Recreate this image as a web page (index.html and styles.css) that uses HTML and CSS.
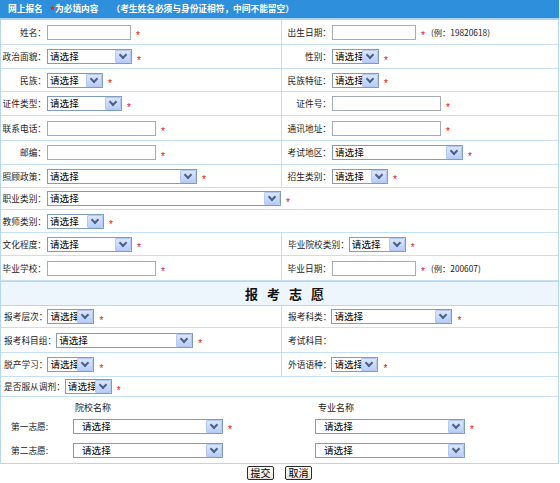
FILE: index.html
```html
<!DOCTYPE html>
<html lang="zh-CN">
<head>
<meta charset="utf-8">
<title>网上报名</title>
<link rel="stylesheet" href="styles.css">
</head>
<body>
<div class="form">
  <div class="head"><span>网上报名</span><span class="hreq">*</span><span>为必填内容</span><span class="hnote">（考生姓名必须与身份证相符，中间不能留空）</span></div>

  <div class="row h25">
    <div class="lab">姓名：</div>
    <div class="fld"><input class="w84" type="text"><span class="req">*</span></div>
    <div class="lab div">出生日期：</div>
    <div class="fld"><input class="w84" type="text"><span class="req">*</span><span class="eg">(例：19820618)</span></div>
  </div>
  <div class="row h24">
    <div class="lab">政治面貌：</div>
    <div class="fld"><span class="sel"><select class="w85"><option>请选择</option></select></span><span class="req">*</span></div>
    <div class="lab div">性别：</div>
    <div class="fld"><span class="sel"><select class="w47"><option>请选择</option></select></span><span class="req">*</span></div>
  </div>
  <div class="row h23">
    <div class="lab">民族：</div>
    <div class="fld"><span class="sel"><select class="w56"><option>请选择</option></select></span><span class="req">*</span></div>
    <div class="lab div">民族特征：</div>
    <div class="fld"><span class="sel"><select class="w47"><option>请选择</option></select></span><span class="req">*</span></div>
  </div>
  <div class="row h24">
    <div class="lab">证件类型：</div>
    <div class="fld"><span class="sel"><select class="w75"><option>请选择</option></select></span><span class="req">*</span></div>
    <div class="lab div">证件号：</div>
    <div class="fld"><input class="w109" type="text"><span class="req">*</span></div>
  </div>
  <div class="row h25">
    <div class="lab">联系电话：</div>
    <div class="fld"><input class="w109" type="text"><span class="req">*</span></div>
    <div class="lab div">通讯地址：</div>
    <div class="fld"><input class="w109" type="text"><span class="req">*</span></div>
  </div>
  <div class="row h24">
    <div class="lab">邮编：</div>
    <div class="fld"><input class="w109" type="text"><span class="req">*</span></div>
    <div class="lab div">考试地区：</div>
    <div class="fld"><span class="sel"><select class="w131"><option>请选择</option></select></span><span class="req">*</span></div>
  </div>
  <div class="row h23">
    <div class="lab">照顾政策：</div>
    <div class="fld"><span class="sel"><select class="w150"><option>请选择</option></select></span><span class="req">*</span></div>
    <div class="lab div">招生类别：</div>
    <div class="fld"><span class="sel"><select class="w56"><option>请选择</option></select></span><span class="req">*</span></div>
  </div>
  <div class="row h22">
    <div class="lab">职业类别：</div>
    <div class="fld span"><span class="sel"><select class="w234"><option>请选择</option></select></span><span class="req">*</span></div>
  </div>
  <div class="row h23">
    <div class="lab">教师类别：</div>
    <div class="fld span"><span class="sel"><select class="w57"><option>请选择</option></select></span><span class="req">*</span></div>
  </div>
  <div class="row h23">
    <div class="lab">文化程度：</div>
    <div class="fld"><span class="sel"><select class="w85"><option>请选择</option></select></span><span class="req">*</span></div>
    <div class="fld inl div rspan">毕业院校类别：<span class="sel"><select class="w57"><option>请选择</option></select></span><span class="req">*</span></div>
  </div>
  <div class="row h25">
    <div class="lab">毕业学校：</div>
    <div class="fld"><input class="w109" type="text"><span class="req">*</span></div>
    <div class="lab div">毕业日期：</div>
    <div class="fld"><input class="w84" type="text"><span class="req">*</span><span class="eg">(例：200607)</span></div>
  </div>

  <div class="title">报考志愿</div>

  <div class="row2 h22">
    <div class="fld inl left">报考层次：<span class="sel"><select class="w47"><option>请选择</option></select></span><span class="req">*</span></div>
    <div class="fld inl div">报考科类：<span class="sel"><select class="w121"><option>请选择</option></select></span><span class="req">*</span></div>
  </div>
  <div class="row2 h25">
    <div class="fld inl left">报考科目组：<span class="sel"><select class="w137"><option>请选择</option></select></span><span class="req">*</span></div>
    <div class="fld inl div">考试科目：</div>
  </div>
  <div class="row2 h24">
    <div class="fld inl left">脱产学习：<span class="sel"><select class="w47"><option>请选择</option></select></span><span class="req">*</span></div>
    <div class="fld inl div">外语语种：<span class="sel"><select class="w47"><option>请选择</option></select></span><span class="req">*</span></div>
  </div>
  <div class="row1 h20">
    <div class="fld inl left">是否服从调剂：<span class="sel"><select class="w47"><option>请选择</option></select></span><span class="req">*</span></div>
  </div>

  <div class="wish">
    <div class="wline cap">
      <span></span>
      <span class="capl">院校名称</span>
      <span class="capr">专业名称</span>
    </div>
    <div class="wline first">
      <span class="wl">第一志愿:</span>
      <span class="wc"><span class="sel"><select class="w150 big"><option>请选择</option></select></span><span class="req">*</span></span>
      <span class="wc"><span class="sel"><select class="w150 big"><option>请选择</option></select></span><span class="req">*</span></span>
    </div>
    <div class="wline">
      <span class="wl">第二志愿:</span>
      <span class="wc"><span class="sel"><select class="w150 big"><option>请选择</option></select></span></span>
      <span class="wc"><span class="sel"><select class="w150 big"><option>请选择</option></select></span></span>
    </div>
  </div>
</div>
<div class="btns">
  <button type="submit" class="btn">提交</button>
  <button type="button" class="btn">取消</button>
</div>
</body>
</html>
```

FILE: styles.css
```css
* { box-sizing: border-box; }

body {
  margin: 0;
  font-family: "Noto Sans CJK SC", sans-serif;
  font-size: 8.7px;
  color: #222;
  background: #fff;
}

.form {
  width: 559px;
  border-left: 1px solid #b7d7f1;
  border-right: 1px solid #b7d7f1;
  border-bottom: 1px solid #b7d7f1;
}

.head {
  margin: 0 -1px;
  height: 20px;
  padding: 0 0 2px 8px;
  background: #2e90dc;
  border-bottom: 2px solid #acd5f3;
  color: #fff;
  font-weight: bold;
  display: flex;
  align-items: center;
  white-space: nowrap;
}
.hreq {
  color: #ff2020;
  font-family: "Liberation Sans", sans-serif;
  font-size: 11px;
  margin-left: 8px;
  margin-top: 3px;
}
.hnote { margin-left: 13px; }

.row {
  display: grid;
  grid-template-columns: 45px 235px 50px 1fr;
  border-bottom: 1px solid #c5dff4;
}
.row2 {
  display: grid;
  grid-template-columns: 280px 1fr;
  border-bottom: 1px solid #c5dff4;
}
.row1 {
  display: grid;
  grid-template-columns: 1fr;
  border-bottom: 1px solid #c5dff4;
}

.h20 { height: 20px; }
.h22 { height: 22px; }
.h23 { height: 23px; }
.h24 { height: 24px; }
.h25 { height: 25px; }

.lab {
  display: flex;
  align-items: center;
  justify-content: flex-end;
  white-space: nowrap;
}
.fld {
  display: flex;
  align-items: center;
  padding-left: 1px;
  white-space: nowrap;
}
.div { border-left: 1px solid #c5dff4; }
.span { grid-column: 2 / -1; }
.rspan { grid-column: 3 / -1; }
.inl { padding-left: 6px; }
.inl.left { padding-left: 3px; }

input {
  height: 15px;
  border: 1px solid #a5acb2;
  padding: 0 2px;
  font: inherit;
  background: #fff;
}
.w84 { width: 84px; }
.w109 { width: 109px; }

.sel {
  position: relative;
  display: inline-flex;
}
.sel::after {
  content: "";
  position: absolute;
  top: 1px;
  right: 1px;
  bottom: 1px;
  width: 14px;
  background: linear-gradient(#dbe6fd, #b8cdfa);
  border: 1px solid #b4c8f3;
  border-radius: 1px;
  pointer-events: none;
}
.sel::before {
  content: "";
  position: absolute;
  right: 6px;
  top: 3px;
  width: 4px;
  height: 4px;
  border-right: 2px solid #4d6185;
  border-bottom: 2px solid #4d6185;
  transform: rotate(45deg);
  z-index: 1;
  pointer-events: none;
}
select {
  appearance: none;
  -webkit-appearance: none;
  height: 15px;
  border: 1px solid #7f9db9;
  border-radius: 0;
  background: #fff;
  color: #000;
  font-family: "Noto Sans CJK SC", sans-serif;
  font-size: 9.6px;
  line-height: 13px;
  padding: 0 16px 0 2px;
  margin: 0;
}
select.big { padding-left: 8px; }
.w47 { width: 47px; }
.w56 { width: 56px; }
.w57 { width: 57px; }
.w75 { width: 75px; }
.w85 { width: 85px; }
.w121 { width: 121px; }
.w131 { width: 131px; }
.w137 { width: 137px; }
.w150 { width: 150px; }
.w234 { width: 234px; }

.req {
  color: #e21010;
  font-family: "Liberation Sans", sans-serif;
  font-size: 10px;
  line-height: 10px;
  margin-left: 5px;
  margin-top: 8px;
}
.eg {
  margin-left: 6px;
  font-size: 8.3px;
  color: #222;
}

.title {
  height: 25px;
  border-top: 1px solid #b7d7f1;
  border-bottom: 1px solid #b7d7f1;
  background: #eef6fd;
  display: flex;
  align-items: center;
  justify-content: center;
  padding-left: 19px;
  font-size: 13px;
  font-weight: bold;
  letter-spacing: 9px;
  color: #111;
}

.wish {
  padding: 4px 0 5px;
  display: flex;
  flex-direction: column;
}
.wline {
  display: grid;
  grid-template-columns: 72px 242px 1fr;
  align-items: center;
  height: 15px;
}
.wline.cap { height: 12px; margin-bottom: 4px; }
.wline.first { margin-bottom: 11px; }
.capl { padding-left: 2px; font-size: 9px; }
.capr { padding-left: 3px; font-size: 9px; }
.wl { padding-left: 10px; }
.wc { display: flex; align-items: center; }

.btns {
  display: flex;
  justify-content: center;
  gap: 11px;
  margin-top: 2px;
  padding-right: 1px;
}
.btn {
  width: 27px;
  height: 14px;
  padding: 0;
  border: 1px solid #2b2b2b;
  border-radius: 2px;
  background: linear-gradient(#ffffff, #e4e4dc);
  font-family: "Noto Sans CJK SC", sans-serif;
  font-size: 10px;
  line-height: 12px;
  color: #000;
}
```
